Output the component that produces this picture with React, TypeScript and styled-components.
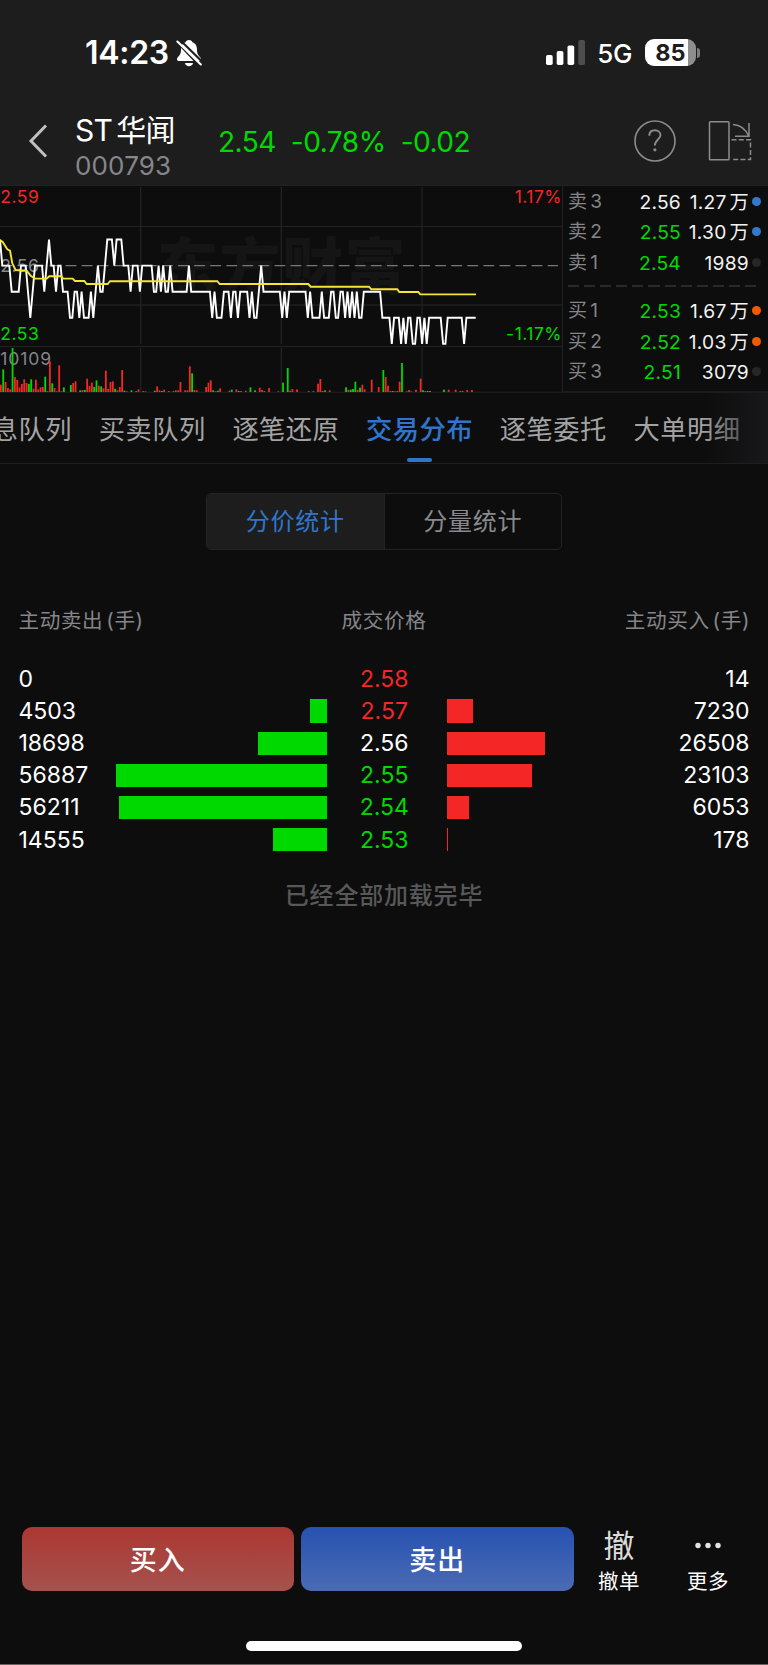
import React from "react";
import styled, { createGlobalStyle } from "styled-components";

const RED = "#f52626";
const GREEN = "#00d900";
const BLUE = "#2f76cb";
const LINE = "#222224";

const GlobalStyle = createGlobalStyle`
  * { box-sizing: border-box; }
  body {
    margin: 0;
    background: #0d0d0d;
    font-family: Inter, "Noto Sans CJK SC", sans-serif;
    color: #fff;
  }
`;

const Screen = styled.div`
  width: 768px;
  height: 1665px;
  display: flex;
  flex-direction: column;
  overflow: hidden;
  background: #0d0d0d;
  border-bottom: 1px solid #676363;
`;

/* ---------- header ---------- */

const Header = styled.header`
  height: 186px;
  flex: none;
  background: #1d1d1d;
  border-bottom: 1px solid #222;
`;

const StatusBar = styled.div`
  height: 103px;
  display: flex;
  align-items: center;
  justify-content: space-between;
  padding: 2px 68px 0 85px;
`;

const StatusGroup = styled.div<{ $gap: number }>`
  display: flex;
  align-items: center;
  gap: ${(p) => p.$gap}px;
`;

const Clock = styled.span`
  font-size: 32px;
  font-weight: 600;
  line-height: 40px;
  letter-spacing: -0.3px;
`;

const Network = styled.span`
  font-size: 26px;
  font-weight: 500;
  line-height: 32px;
  letter-spacing: -0.4px;
  margin: 3px 0 0 -1.5px;
`;

const Battery = styled.div`
  display: flex;
  align-items: center;
  gap: 1px;
  margin-left: -1px;
`;

const BatteryBody = styled.div`
  width: 51px;
  height: 27px;
  border-radius: 9px;
  background: linear-gradient(90deg, #fff 43px, #8e8e8e 43px);
  color: #1d1d1d;
  font-size: 23.5px;
  font-weight: 700;
  line-height: 27px;
  text-align: center;
`;

const BatteryTip = styled.div`
  width: 3px;
  height: 10px;
  border-radius: 0 4px 4px 0;
  background: #7d7d7d;
`;

const NavBar = styled.div`
  height: 82px;
  display: flex;
  align-items: flex-start;
  padding-left: 28px;
`;

const BackIcon = styled.svg`
  margin: 21px 0 0 0;
`;

const StockName = styled.div`
  width: 143px;
  margin: 8px 0 0 26px;
`;

const Title = styled.div`
  display: flex;
  gap: 4px;
  font-size: 30px;
  line-height: 38px;
  letter-spacing: -0.7px;
  white-space: nowrap;
`;

const Code = styled.div`
  font-size: 26px;
  line-height: 34px;
  letter-spacing: 0.15px;
  color: #86868c;
`;

const Quote = styled.div`
  display: flex;
  gap: 15px;
  width: 416px;
  margin-top: 21px;
  color: ${GREEN};
  font-size: 28px;
  line-height: 36px;
  letter-spacing: -0.5px;
`;

const NavIcon = styled.svg<{ $left?: number }>`
  flex: none;
  margin: 17px 0 0 ${(p) => p.$left ?? 0}px;
`;

/* ---------- chart and order book ---------- */

const Market = styled.section`
  height: 207px;
  flex: none;
  display: flex;
`;

const Chart = styled.svg`
  flex: none;
  display: block;
  font-size: 17.5px;
  letter-spacing: 0.5px;
`;

const Book = styled.div`
  flex: 1;
  border-bottom: 2px solid #1c1c1e;
  border-left: 1px solid ${LINE};
  padding: 0 6px 0 5px;
`;

const BookRow = styled.div`
  display: grid;
  grid-template-columns: 54px 59px 68px 12px;
  align-items: center;
  height: 30.4px;
  font-size: 19.2px;
  line-height: 30px;
  letter-spacing: 0.25px;
  white-space: nowrap;

  & > span { padding-top: 1px; }
`;

const BookSide = styled.span`
  display: flex;
  gap: 3px;
  color: #85858a;
  font-size: 19px;
`;

const BookPrice = styled.span<{ $color: string }>`
  color: ${(p) => p.$color};
  text-align: right;
`;

const BookVolume = styled.span`
  display: flex;
  justify-content: flex-end;
  gap: 3px;
  color: #f2f2f2;
`;

const Dot = styled.i<{ $color: string }>`
  width: 9px;
  height: 9px;
  border-radius: 50%;
  justify-self: end;
  background: ${(p) => p.$color};
`;

const BookDivider = styled.div`
  height: 2px;
  width: 189px;
  margin: 8px 0 8px;
  background: repeating-linear-gradient(90deg, #29292b 0 11px, transparent 11px 16.1px);
`;

/* ---------- tabs ---------- */

const TabBar = styled.nav`
  position: relative;
  height: 71px;
  flex: none;
  display: flex;
  gap: 26.7px;
  padding-left: 0;
  border-bottom: 1px solid #1e1e1e;
  overflow: hidden;
`;

const Tab = styled.div<{ $active?: boolean; $first?: boolean }>`
  flex: none;
  display: flex;
  flex-direction: column;
  align-items: center;
  width: 107px;
  margin-left: ${(p) => (p.$first ? -35 : 0)}px;
  font-size: 26.3px;
  letter-spacing: 0.45px;
  line-height: 38px;
  padding-top: 18px;
  font-weight: ${(p) => (p.$active ? 500 : 400)};
  color: ${(p) => (p.$active ? BLUE : "#a3a3a3")};
  white-space: nowrap;
`;

const TabMark = styled.div`
  width: 25px;
  height: 4px;
  margin-top: 9px;
  border-radius: 2px;
  background: ${BLUE};
`;

const TabFade = styled.div`
  position: absolute;
  top: 0;
  right: 0;
  width: 66px;
  height: 70px;
  background: linear-gradient(90deg, rgba(13, 13, 13, 0), rgba(24, 24, 27, 0.5) 55%, #18181b);
`;

/* ---------- statistics ---------- */

const Segmented = styled.div`
  width: 356px;
  height: 57px;
  margin: 29px 0 0 206px;
  flex: none;
  display: flex;
  border: 1.5px solid #232325;
  border-radius: 5px;
  overflow: hidden;
`;

const Segment = styled.div<{ $active?: boolean }>`
  flex: 1;
  text-align: center;
  font-size: 24px;
  line-height: 56px;
  letter-spacing: 0.8px;
  color: ${(p) => (p.$active ? BLUE : "#8a8a8e")};
  background: ${(p) => (p.$active ? "#1d1d1d" : "transparent")};
  & + & { border-left: 1px solid #232325; }
`;

const Columns = styled.div`
  display: grid;
  grid-template-columns: 97.5px 211px 119.500px 211px 92px;
  align-items: center;
  margin: 0 18.5px 0 18.5px;
`;

const HeadRow = styled(Columns)`
  grid-template-columns: 1fr 1fr 1fr;
  height: 32px;
  margin-top: 55px;
  margin-bottom: 26px;
  color: #85858a;
  font-size: 20.6px;
  letter-spacing: 0.6px;
  line-height: 32px;
`;

const HeadCell = styled.span<{ $align: "flex-start" | "center" | "flex-end" }>`
  display: flex;
  gap: 3px;
  justify-content: ${(p) => p.$align};
  &:last-child { margin-right: -0.5px; }
`;

const StatRow = styled(Columns)`
  height: 32.1px;
  font-size: 23px;
  line-height: 32px;
`;

const Amount = styled.span<{ $right?: boolean }>`
  text-align: ${(p) => (p.$right ? "right" : "left")};
  white-space: nowrap;
`;

const StatPrice = styled.span<{ $color: string }>`
  color: ${(p) => p.$color};
  text-align: center;
  padding-right: 5px;
`;

const Bar = styled.div<{ $sell?: boolean }>`
  height: 23.4px;
  background: ${(p) => (p.$sell ? GREEN : RED)};
  justify-self: ${(p) => (p.$sell ? "end" : "start")};
`;

const Loaded = styled.div`
  margin-top: 22px;
  text-align: center;
  font-size: 24px;
  font-weight: 500;
  letter-spacing: 0.8px;
  line-height: 36px;
  color: #585858;
`;

/* ---------- bottom bar ---------- */

const ActionBar = styled.footer`
  margin-top: auto;
  height: 137px;
  flex: none;
  display: flex;
  padding-left: 21.5px;
`;

const TradeButton = styled.div<{ $from: string; $to: string }>`
  width: 272.5px;
  height: 64px;
  margin-right: 7px;
  border-radius: 10px;
  background: linear-gradient(180deg, ${(p) => p.$from}, ${(p) => p.$to});
  text-align: center;
  font-size: 27px;
  font-weight: 500;
  letter-spacing: 1px;
  line-height: 67px;
`;

const Action = styled.div`
  display: flex;
  flex-direction: column;
  align-items: center;
  width: 89px;
  margin-left: -6px;
  & + & { margin-left: 0; }
`;

const ActionIcon = styled.div`
  height: 37px;
  font-size: 31px;
  line-height: 37px;
  color: #dcdcdc;
`;

const ActionLabel = styled.div`
  font-size: 20.5px;
  letter-spacing: 0.6px;
  line-height: 36px;
`;

const HomeIndicator = styled.div`
  position: absolute;
  left: 246px;
  top: 1641px;
  width: 275.5px;
  height: 10px;
  border-radius: 5px;
  background: #fff;
`;

/* ---------- data ---------- */

const STEP = 562 / 241;

// minute index : last digit of the price (2.5x)
const PRICE_PATH =
  "0:7 1:6 4:6 5:5 8:5 9:6 11:6 13:4 15:6 18:6 19:5 21:7 22:6 23:6 24:5 25:6 26:6 27:5 29:5 30:4 31:4 32:5 33:5 34:4 35:5 36:4 38:4 39:5 40:4 42:6 43:5 44:5 46:7 48:7 49:6 50:7 52:7 53:6 55:6 56:5 57:6 59:6 60:5 61:6 65:6 66:5 67:5 68:6 69:5 70:6 71:5 72:5 73:6 74:5 80:5 81:6 82:5 90:5 91:4 92:5 93:4 95:4 96:5 98:5 99:4 100:5 101:5 102:4 103:5 106:5 107:4 108:5 109:4 110:4 112:6 113:5 120:5 121:4 122:5 123:4 124:5 131:5 132:4 133:5 134:4 137:4 138:5 139:4 141:4 142:5 143:5 144:4 145:4 146:5 147:5 148:4 149:5 150:4 151:5 152:4 153:5 154:4 155:4 156:5 163:5 164:4 167:4 168:3 169:4 171:4 172:3 173:4 174:3 175:4 176:4 177:3 178:3 179:4 180:4 181:3 182:4 183:3 184:4 189:4 190:3 191:3 192:4 198:4 199:3 200:4 204:4";

const AVERAGE_PATH =
  "0,54 2.7,56 7.3,63.3 10,64.6 12.3,77.3 15.6,84 26.7,84.7 30.7,89.7 35,92.6 46.7,92.6 49.3,90.3 61,90.3 63.3,92.6 72.7,92.6 75,95 84.3,95 86.7,98 107.7,98 110,95.2 217.3,95.2 219.7,98 308.3,98 310.7,100.7 369,100.7 371.3,103.3 397.3,103.3 399.3,106 418.3,106 420.3,108.4 476,108.4";

// minute index, r(ed) or g(reen), volume
const VOLUMES =
  "0r22 1g68 2r30 3r12 4r8 5g132 6r45 7r36 8r14 9r24 10r38 11r27 12g24 13g38 14r10 15r37 16r8 17r14 18r15 19g46 20g2 21r92 22g26 23r12 24r2 25r80 26r2 27g14 30g21 31r27 32r32 34g5 35r6 36g6 37r40 38r18 39r28 40g15 41g35 42r19 43g17 44r11 45r64 46r9 47r30 48r32 49g10 50r5 51r15 52r66 53g4 54r2 56g5 58r3 59r8 61r3 62r2 66g4 67r17 68r5 69g3 70r7 72r3 74r3 75r5 76r5 77r30 79r5 80r5 81r77 82g56 83r6 84r5 88r15 89r28 90r35 91g5 92r2 93g4 94r11 98r4 99g7 101r8 102g3 103r3 105r4 107g14 109g5 111r13 112r6 113r3 115r12 119r2 121g28 123g72 124r4 125r9 127r8 132g2 134g2 136r25 137r39 138r3 139g5 141r5 148g14 149r6 150g7 151g9 152g31 153r6 154g13 155r22 156r8 159r37 162r15 164g66 165r45 166r19 167r3 168g3 169r2 170r3 171r31 172g87 174r2 175r6 176r2 178r7 180r40 181g5 182r3 183g3 184g3 190g7 192r7 195r7 197r3 198r3 200r6 202r6";

const pricePoints = PRICE_PATH.split(" ")
  .map((p) => p.split(":").map(Number))
  .map(([i, level]) => `${(i * STEP).toFixed(1)},${(79.6 + (6 - level) * 26.1).toFixed(1)}`)
  .join(" ");

const volumeBars = VOLUMES.split(" ").map((v) => {
  const [, i, side, value] = v.match(/(\d+)([rg])(\d+)/)!;
  return { x: Number(i) * STEP, color: side === "r" ? RED : GREEN, h: (Number(value) / 132) * 44 };
});

type BookEntry = { side: string; level: number; price: string; volume: string; unit?: string; up?: boolean; dot: string };

const asks: BookEntry[] = [
  { side: "卖", level: 3, price: "2.56", volume: "1.27", unit: "万", up: true, dot: "#3478cb" },
  { side: "卖", level: 2, price: "2.55", volume: "1.30", unit: "万", dot: "#3478cb" },
  { side: "卖", level: 1, price: "2.54", volume: "1989", dot: "#262628" },
];
const bids: BookEntry[] = [
  { side: "买", level: 1, price: "2.53", volume: "1.67", unit: "万", dot: "#f05a05" },
  { side: "买", level: 2, price: "2.52", volume: "1.03", unit: "万", dot: "#f05a05" },
  { side: "买", level: 3, price: "2.51", volume: "3079", dot: "#262628" },
];

const tabs = ["信息队列", "买卖队列", "逐笔还原", "交易分布", "逐笔委托", "大单明细"];

const stats = [
  { sell: 0, price: "2.58", buy: 14, color: RED },
  { sell: 4503, price: "2.57", buy: 7230, color: RED },
  { sell: 18698, price: "2.56", buy: 26508, color: "#fff" },
  { sell: 56887, price: "2.55", buy: 23103, color: GREEN },
  { sell: 56211, price: "2.54", buy: 6053, color: GREEN },
  { sell: 14555, price: "2.53", buy: 178, color: GREEN },
];
const MAX = 56887;

/* ---------- parts ---------- */

const MutedBell = () => (
  <svg width="26" height="28" viewBox="0 0 26 28">
    <path
      d="M13 1C11 1 10 2 9.600 3.200C6 4.500 5 7.500 5 11C5 15 3.500 16.500 1.600 18.500C0.300 20 1 22 2.800 22H23.200C25 22 25.700 20 24.400 18.500C22.500 16.500 21 15 21 11C21 7.500 20 4.500 16.400 3.200C16 2 15 1 13 1Z"
      fill="#fff"
    />
    <path d="M9 24H17C16.500 28.200 9.500 28.200 9 24Z" fill="#fff" />
    <path d="M2.500 -0.500L27 23.500" stroke="#1d1d1d" strokeWidth="2" />
    <path d="M-1 1L24 27.500" stroke="#1d1d1d" strokeWidth="2" />
    <path d="M1.400 2.600L24.800 25.400" stroke="#fff" strokeWidth="2.100" strokeLinecap="round" />
  </svg>
);

const Signal = () => (
  <svg width="39" height="25" viewBox="0 0 39 25">
    <rect x="0" y="15" width="6.700" height="10" rx="1.700" fill="#fff" />
    <rect x="10.700" y="11" width="6.700" height="14" rx="1.700" fill="#fff" />
    <rect x="21.500" y="5.500" width="6.700" height="19.500" rx="1.700" fill="#fff" />
    <rect x="32.300" y="0" width="6.700" height="25" rx="1.700" fill="#4d4d4d" />
  </svg>
);

const BookLine = ({ e }: { e: BookEntry }) => (
  <BookRow>
    <BookSide>
      <span>{e.side}</span>
      <span>{e.level}</span>
    </BookSide>
    <BookPrice $color={e.up ? "#f2f2f2" : GREEN}>{e.price}</BookPrice>
    <BookVolume>
      <span>{e.volume}</span>
      {e.unit && <span>{e.unit}</span>}
    </BookVolume>
    <Dot $color={e.dot} />
  </BookRow>
);

const MinuteChart = () => (
  <Chart width="562" height="207" viewBox="0 0 562 207">
    <text x="157" y="103" fontSize="61" fontWeight="900" fill="#151516" letterSpacing="1.500">
      东方财富
    </text>
    <g fill={LINE}>
      {[140, 280.700, 421.400].map((x) => (
        <g key={x}>
          <rect x={x} y="1" width="1.300" height="157" />
          <rect x={x} y="162" width="1.300" height="44" />
        </g>
      ))}
      <rect x="0" y="40" width="562" height="1" />
      <rect x="0" y="118.300" width="562" height="1.300" />
      <rect x="0" y="160" width="562" height="1" />
      <rect x="0" y="205.700" width="562" height="1" />
    </g>
    <line x1="1.300" y1="79.600" x2="558" y2="79.600" stroke="#78767e" strokeWidth="1.300" strokeDasharray="10.800 5.270" />
    <text x="0.300" y="85.500" fill="#85858a">2.56</text>
    <text x="0.300" y="178.800" fill="#85858a" letterSpacing="0.900">10109</text>
    <polyline points={pricePoints} fill="none" stroke="#fff" strokeWidth="1.900" />
    <polyline points={AVERAGE_PATH} fill="none" stroke="#f3e435" strokeWidth="1.900" />
    {volumeBars.map((b) => (
      <rect key={b.x} x={b.x} y={206 - b.h} width="1.800" height={b.h} fill={b.color} />
    ))}
    <text x="0.300" y="16.500" fill={RED}>2.59</text>
    <text x="0.300" y="153.500" fill={GREEN}>2.53</text>
    <text x="562" y="16.500" fill={RED} textAnchor="end">1.17%</text>
    <text x="562" y="153.500" fill={GREEN} textAnchor="end">-1.17%</text>
  </Chart>
);

export default function App() {
  return (
    <Screen>
      <GlobalStyle />
      <Header>
        <StatusBar>
          <StatusGroup $gap={7}>
            <Clock>14:23</Clock>
            <MutedBell />
          </StatusGroup>
          <StatusGroup $gap={14}>
            <Signal />
            <Network>5G</Network>
            <Battery>
              <BatteryBody>85</BatteryBody>
              <BatteryTip />
            </Battery>
          </StatusGroup>
        </StatusBar>
        <NavBar>
          <BackIcon width="21" height="34" viewBox="0 0 21 34">
            <path d="M18 1.500L3 17L18 32.500" fill="none" stroke="#c0c0c0" strokeWidth="3" />
          </BackIcon>
          <StockName>
            <Title>
              <span>ST</span>
              <span>华闻</span>
            </Title>
            <Code>000793</Code>
          </StockName>
          <Quote>
            <span>2.54</span>
            <span>-0.78%</span>
            <span>-0.02</span>
          </Quote>
          <NavIcon width="42" height="42" viewBox="0 0 42 42" fill="none" stroke="#8c8c8c" strokeWidth="1.600">
            <circle cx="21" cy="21" r="20" />
            <path d="M15.300 15.800C15.300 12.300 17.700 10.300 20.900 10.300C24.200 10.300 26.500 12.400 26.500 15.300C26.500 19.200 20.900 19.500 20.900 25.600" strokeWidth="1.900" />
            <circle cx="20.900" cy="29.800" r="1.600" fill="#8c8c8c" stroke="none" />
          </NavIcon>
          <NavIcon $left={32} width="44" height="42" viewBox="0 0 44 42" fill="none" stroke="#8c8c8c" strokeWidth="1.500">
            <rect x="1.500" y="1.800" width="19.500" height="38" rx="0.800" />
            <path d="M25 4.500C33 5 37.500 9 40.500 15.800M41 3V16.300H27" />
            <path d="M23.500 19.700H42.500V39.500H23.500" strokeDasharray="5 2.300" />
          </NavIcon>
        </NavBar>
      </Header>

      <Market>
        <MinuteChart />
        <Book>
          {asks.map((e) => (
            <BookLine key={e.level} e={e} />
          ))}
          <BookDivider />
          {bids.map((e) => (
            <BookLine key={e.level} e={e} />
          ))}
        </Book>
      </Market>

      <TabBar>
        {tabs.map((name, i) => (
          <Tab key={name} $active={i === 3} $first={i === 0}>
            {name}
            {i === 3 && <TabMark />}
          </Tab>
        ))}
        <TabFade />
      </TabBar>

      <Segmented>
        <Segment $active>分价统计</Segment>
        <Segment>分量统计</Segment>
      </Segmented>

      <HeadRow>
        <HeadCell $align="flex-start">
          <span>主动卖出</span>
          <span>(手)</span>
        </HeadCell>
        <HeadCell $align="center">成交价格</HeadCell>
        <HeadCell $align="flex-end">
          <span>主动买入</span>
          <span>(手)</span>
        </HeadCell>
      </HeadRow>
      {stats.map((s) => (
        <StatRow key={s.price}>
          <Amount>{s.sell}</Amount>
          <Bar $sell style={{ width: `${(s.sell / MAX) * 100}%` }} />
          <StatPrice $color={s.color}>{s.price}</StatPrice>
          <Bar style={{ width: `${(s.buy / MAX) * 100}%` }} />
          <Amount $right>{s.buy}</Amount>
        </StatRow>
      ))}
      <Loaded>已经全部加载完毕</Loaded>

      <ActionBar>
        <TradeButton $from="#ac3732" $to="#a5524e">买入</TradeButton>
        <TradeButton $from="#2752b1" $to="#4b6bb4">卖出</TradeButton>
        <Action>
          <ActionIcon>撤</ActionIcon>
          <ActionLabel>撤单</ActionLabel>
        </Action>
        <Action>
          <ActionIcon>
            <svg width="28" height="37" viewBox="0 0 28 37" fill="#e4e4e4">
              <circle cx="4" cy="18.500" r="2.700" />
              <circle cx="14" cy="18.500" r="2.700" />
              <circle cx="24" cy="18.500" r="2.700" />
            </svg>
          </ActionIcon>
          <ActionLabel>更多</ActionLabel>
        </Action>
      </ActionBar>
      <HomeIndicator />
    </Screen>
  );
}
